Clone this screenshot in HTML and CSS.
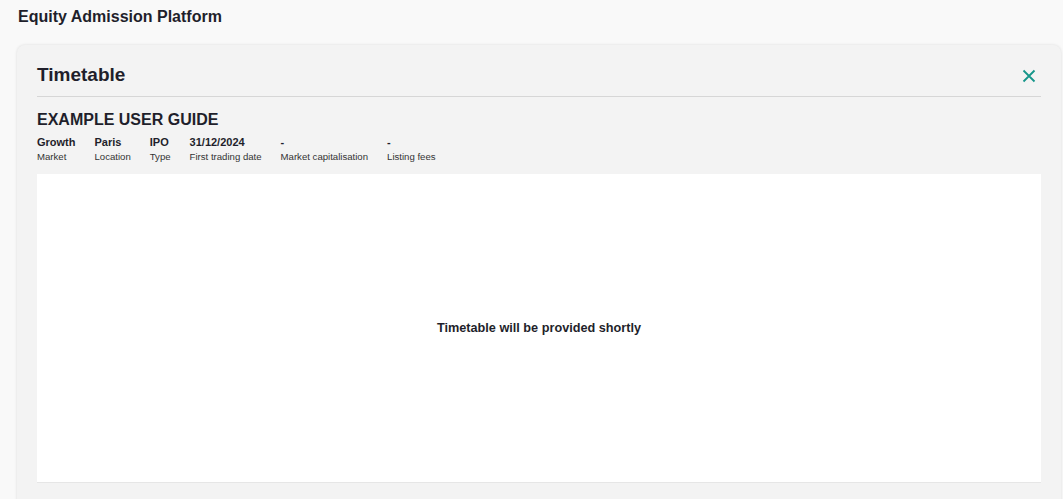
FILE: index.html
```html
<!DOCTYPE html>
<html lang="en">
<head>
  <meta charset="UTF-8" />
  <title>Equity Admission Platform</title>
  <link rel="stylesheet" href="styles.css">
</head>
<body>
  <header class="app-title">Equity Admission Platform</header>

  <section class="card">
    <div class="card-head">
      <h1>Timetable</h1>
      <button class="close" aria-label="Close">
        <svg width="14" height="14" viewBox="0 0 14 14">
          <path d="M1.5 1.5 L12.5 12.5 M12.5 1.5 L1.5 12.5" stroke="#16968a" stroke-width="1.8" fill="none"/>
        </svg>
      </button>
    </div>

    <h2>EXAMPLE USER GUIDE</h2>

    <div class="facts">
      <div><b>Growth</b><span>Market</span></div>
      <div><b>Paris</b><span>Location</span></div>
      <div><b>IPO</b><span>Type</span></div>
      <div><b>31/12/2024</b><span>First trading date</span></div>
      <div><b>-</b><span>Market capitalisation</span></div>
      <div><b>-</b><span>Listing fees</span></div>
    </div>

    <div class="panel">
      <p>Timetable will be provided shortly</p>
    </div>
  </section>
</body>
</html>
```

FILE: styles.css
```css
body {
  margin: 0;
  font-family: "Liberation Sans", Arial, sans-serif;
  background: #f9f9f9;
  color: #1f1f2b;
  overflow: hidden;
}

.app-title {
  font-size: 16px;
  font-weight: bold;
  padding: 8px 18px 0;
  height: 37px;
}

/* main card */
.card {
  margin: 0 2px 0 17px;
  background: #f3f3f3;
  border-radius: 8px;
  box-shadow: 0 0 3px rgba(0, 0, 0, 0.12);
  padding: 17px 20px 20px;
  height: 480px;
}

.card-head {
  display: flex;
  justify-content: space-between;
  align-items: center;
  border-bottom: 1px solid #d6d6d6;
  padding-bottom: 8px;
}

.card-head h1 {
  margin: 0;
  font-size: 19px;
  line-height: 26px;
}

.close {
  background: none;
  border: none;
  padding: 0;
  margin-right: 5px;
  margin-top: 2px;
  cursor: pointer;
  display: flex;
}

h2 {
  margin: 13px 0 5px;
  font-size: 16px;
  line-height: 20px;
}

.facts {
  display: flex;
  gap: 19px;
}

.facts div {
  display: flex;
  flex-direction: column;
}

.facts b {
  font-size: 11px;
  line-height: 15px;
}

.facts span {
  font-size: 9.6px;
  line-height: 14px;
  color: #333;
}

.panel {
  margin-top: 10px;
  background: #fff;
  height: 308px;
  display: flex;
  align-items: center;
  justify-content: center;
  border-bottom: 1px solid #e6e6e6;
}

.panel p {
  margin: 0;
  font-size: 12.7px;
  font-weight: bold;
}
```
